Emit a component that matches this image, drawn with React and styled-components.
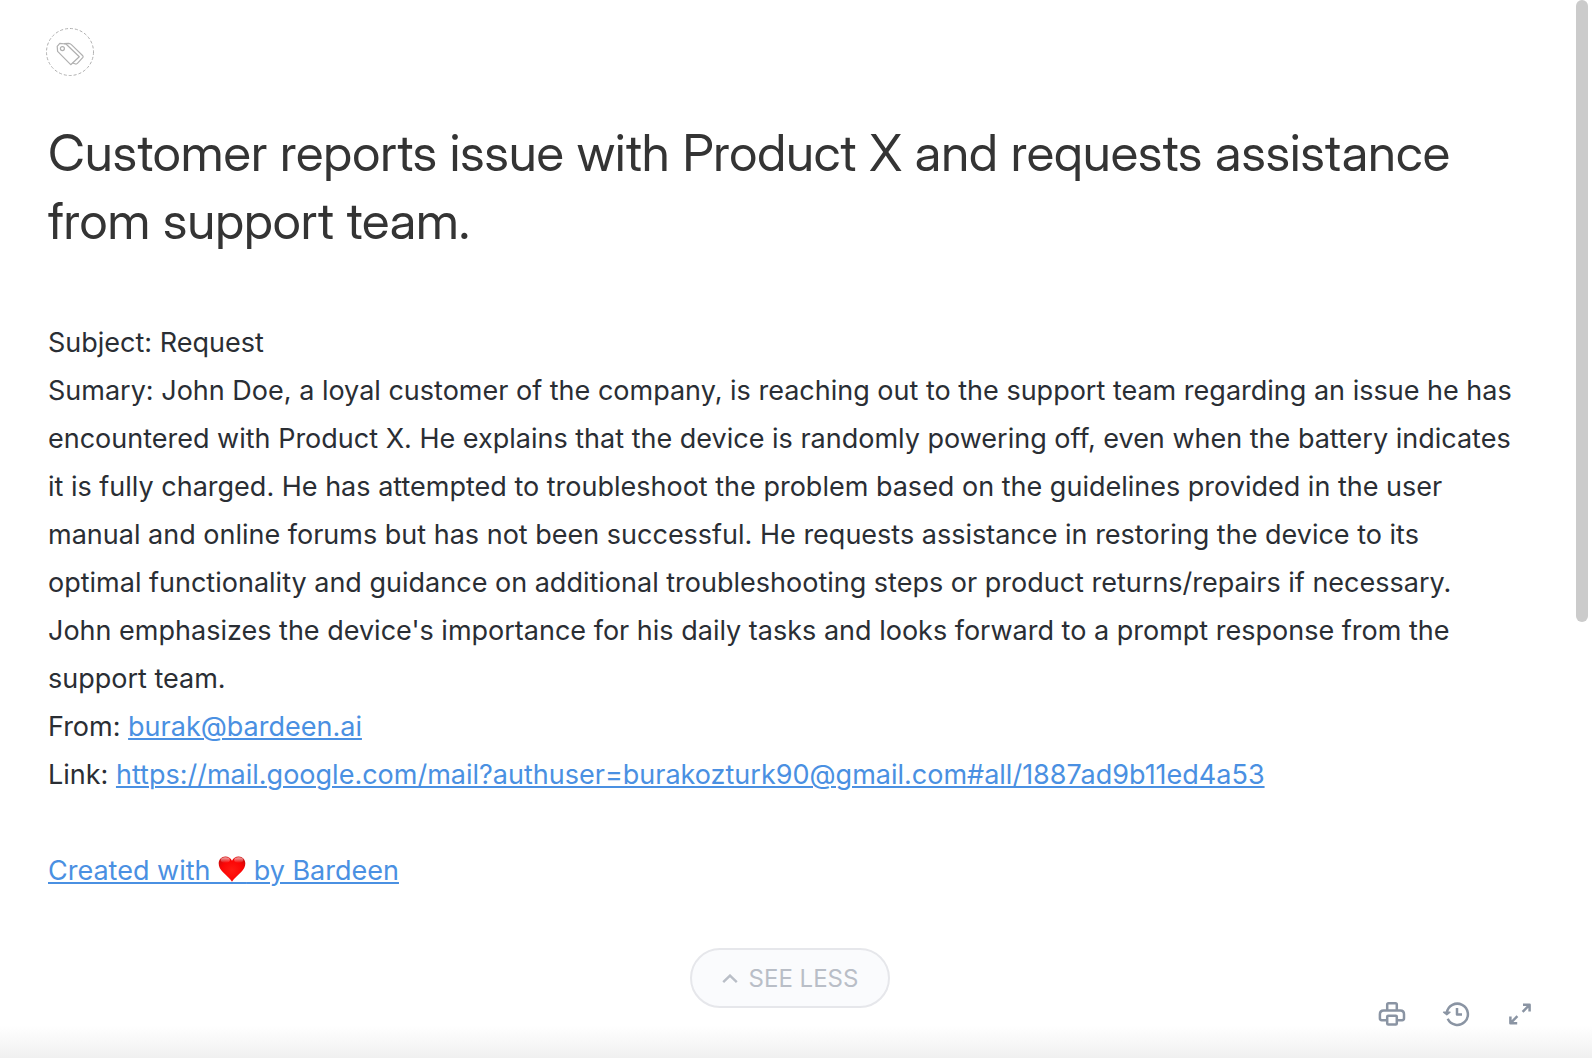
import React from "react";
import styled, { createGlobalStyle } from "styled-components";

const GlobalStyle = createGlobalStyle`
  * {
    box-sizing: border-box;
  }
  body {
    margin: 0;
    background: #fff;
    font-family: Inter, "Liberation Sans", sans-serif;
  }
`;

const Page = styled.div`
  display: flex;
  min-height: 100vh;
  background: linear-gradient(to top, #f0f0f0, #fff 32px);
`;

const Main = styled.main`
  flex: 1;
  min-width: 0;
  padding: 28px 44px 28px 48px;
`;

const ScrollTrack = styled.div`
  width: 16px;
  flex-shrink: 0;
`;

const ScrollThumb = styled.div`
  width: 12px;
  height: 622px;
  border-radius: 6px;
  background: #cbcbcb;
`;

const TagButton = styled.button`
  display: block;
  width: 48px;
  height: 48px;
  margin-left: -2px;
  padding: 0;
  border: none;
  background: none;
  color: #b0b0b0;
  cursor: pointer;

  svg {
    display: block;
  }
`;

const Title = styled.h1`
  margin: 43px 0 0;
  font-family: "Inter Display", Inter, "Liberation Sans", sans-serif;
  font-size: 51px;
  line-height: 68px;
  font-weight: 400;
  color: #343434;
`;

const Description = styled.div`
  margin-top: 64px;
  padding-right: 16px;
  font-size: 27px;
  line-height: 48px;
  color: #2a2e34;

  p {
    margin: 0;
  }
`;

const Link = styled.a`
  color: #4a90e2;
  text-decoration: underline;
  text-decoration-thickness: 2px;
  text-underline-offset: 2px;
`;

const Credit = styled.p`
  && {
    margin-top: 48px;
  }
`;

const HeartIcon = styled.svg`
  width: 28px;
  height: 28px;
  border-bottom: 2px solid currentColor;
  vertical-align: -4px;
`;

const Footer = styled.footer`
  display: grid;
  grid-template-columns: 1fr auto 1fr;
  align-items: start;
  margin-top: 53px;
`;

const SeeLess = styled.button`
  grid-column: 2;
  display: flex;
  align-items: center;
  gap: 11px;
  height: 60px;
  padding: 2px 30px 0;
  border: 2px solid #e6e7eb;
  border-radius: 30px;
  background: #fafbfd;
  color: #b9bec7;
  font-family: inherit;
  font-size: 24px;
  line-height: 28px;
  cursor: pointer;
`;

const Actions = styled.div`
  display: flex;
  justify-content: flex-end;
  gap: 40px;
  padding-top: 52px;
`;

const ActionButton = styled.button`
  display: flex;
  align-items: center;
  justify-content: center;
  width: 24px;
  height: 28px;
  padding: 0;
  border: none;
  background: none;
  color: #8a94a3;
  cursor: pointer;

  svg {
    flex-shrink: 0;
  }
`;

const ActionSvg = ({ children }) => (
  <svg
    width="28"
    height="28"
    viewBox="0 0 28 28"
    fill="none"
    stroke="currentColor"
    strokeWidth="2.5"
    strokeLinejoin="round"
    aria-hidden="true"
  >
    {children}
  </svg>
);

const TagsIcon = () => (
  <svg
    width="48"
    height="48"
    viewBox="0 0 48 48"
    fill="none"
    stroke="currentColor"
    strokeLinejoin="round"
    aria-hidden="true"
  >
    <circle cx="24" cy="24" r="23.5" strokeDasharray="3 2" />
    <path
      strokeWidth="1.2"
      d="M20 16 33.3 28.7 24.7 36.7 11.6 23.4 11.2 18.4 13.8 15.4Z"
    />
    <circle cx="16.4" cy="20.6" r="2" strokeWidth="1.2" />
    <path
      strokeWidth="1.2"
      d="M18 15.6 22.6 15.3Q24.2 15.5 25.4 16.6L36.8 27.8Q37.5 28.6 36.9 29.4L31.4 35.4Q30.6 36.2 29.6 36L26.6 35"
    />
  </svg>
);

const Heart = () => (
  <HeartIcon viewBox="0 0 28 26" role="img" aria-label="love">
    <defs>
      <radialGradient id="heartFill" cx="50%" cy="55%" r="60%">
        <stop offset="0" stopColor="#ff1a12" />
        <stop offset="0.65" stopColor="#fb0505" />
        <stop offset="1" stopColor="#cf0a0a" />
      </radialGradient>
      <linearGradient id="heartShine" x1="0" y1="0" x2="0" y2="1">
        <stop offset="0" stopColor="#fff" stopOpacity="0.65" />
        <stop offset="1" stopColor="#fff" stopOpacity="0" />
      </linearGradient>
    </defs>
    <path
      fill="url(#heartFill)"
      d="M14 25.8C12 22.2 8.2 19.6 4.8 16 2.2 13.2.7 10.6.7 7.4.7 3.4 3.6.4 7.3.4 10.4.4 12.9 2 14 4.8 15.1 2 17.6.4 20.7.4 24.4.4 27.3 3.4 27.3 7.4 27.3 10.6 25.8 13.2 23.2 16 19.8 19.6 16 22.2 14 25.8Z"
    />
    <ellipse cx="7.3" cy="4.1" rx="4.6" ry="2.8" fill="url(#heartShine)" />
    <ellipse cx="20.7" cy="4.1" rx="4.6" ry="2.8" fill="url(#heartShine)" />
  </HeartIcon>
);

const App = () => {
  const [expanded, setExpanded] = React.useState(true);

  return (
    <>
      <GlobalStyle />
      <Page>
        <Main>
          <TagButton aria-label="Edit tags">
            <TagsIcon />
          </TagButton>
          <Title>
            Customer reports issue with Product X and requests assistance from
            support team.
          </Title>
          {expanded && (
            <Description>
              <p>Subject: Request</p>
              <p>
                Sumary: John Doe, a loyal customer of the company, is reaching
                out to the support team regarding an issue he has encountered
                with Product X. He explains that the device is randomly powering
                off, even when the battery indicates it is fully charged. He has
                attempted to troubleshoot the problem based on the guidelines
                provided in the user manual and online forums but has not been
                successful. He requests assistance in restoring the device to
                its optimal functionality and guidance on additional
                troubleshooting steps or product returns/repairs if necessary.
                John emphasizes the device's importance for his daily tasks and
                looks forward to a prompt response from the support team.
              </p>
              <p>
                From: <Link href="mailto:burak@bardeen.ai">burak@bardeen.ai</Link>
              </p>
              <p>
                Link:{" "}
                <Link href="https://mail.google.com/mail?authuser=burakozturk90@gmail.com#all/1887ad9b11ed4a53">
                  https://mail.google.com/mail?authuser=burakozturk90@gmail.com#all/1887ad9b11ed4a53
                </Link>
              </p>
              <Credit>
                <Link href="https://www.bardeen.ai">
                  Created with <Heart /> by Bardeen
                </Link>
              </Credit>
            </Description>
          )}
          <Footer>
            <SeeLess onClick={() => setExpanded((v) => !v)}>
              <svg
                width="16"
                height="10"
                viewBox="0 0 16 10"
                fill="none"
                stroke="currentColor"
                strokeWidth="2.4"
                aria-hidden="true"
              >
                <path d="M1.2 8.2 8 1.6 14.8 8.2" />
              </svg>
              {expanded ? "SEE LESS" : "SEE MORE"}
            </SeeLess>
            <Actions>
              <ActionButton aria-label="Print">
                <ActionSvg>
                  <path d="M9.2 10.2V4.6Q9.2 3.2 10.6 3.2H17.4Q18.8 3.2 18.8 4.6V10.2" />
                  <path d="M8.6 20.2H3.8Q1.9 20.2 1.9 18.3V14.2Q1.9 10.4 5.7 10.4H22.3Q26 10.4 26 14.2V18.3Q26 20.2 24.1 20.2H19.4" />
                  <rect x="9.2" y="15.8" width="9.6" height="8.8" rx="1" />
                </ActionSvg>
              </ActionButton>
              <ActionButton aria-label="History">
                <ActionSvg>
                  <path d="M5.7 18.8A10.6 10.6 0 1 0 4.8 12.8" />
                  <path
                    d="M1.6 12.2H8L4.8 14.8Z"
                    fill="currentColor"
                    strokeWidth="1.4"
                  />
                  <path d="M15 8V14.5H20" />
                </ActionSvg>
              </ActionButton>
              <ActionButton aria-label="Expand">
                <ActionSvg>
                  <path d="M17 4.8H23.6V11.4M23.2 5.2 16.6 11.8" />
                  <path d="M4.4 16.6V23.2H11.2M4.8 22.8 11.4 16.2" />
                </ActionSvg>
              </ActionButton>
            </Actions>
          </Footer>
        </Main>
        <ScrollTrack>
          <ScrollThumb />
        </ScrollTrack>
      </Page>
    </>
  );
};

export default App;
